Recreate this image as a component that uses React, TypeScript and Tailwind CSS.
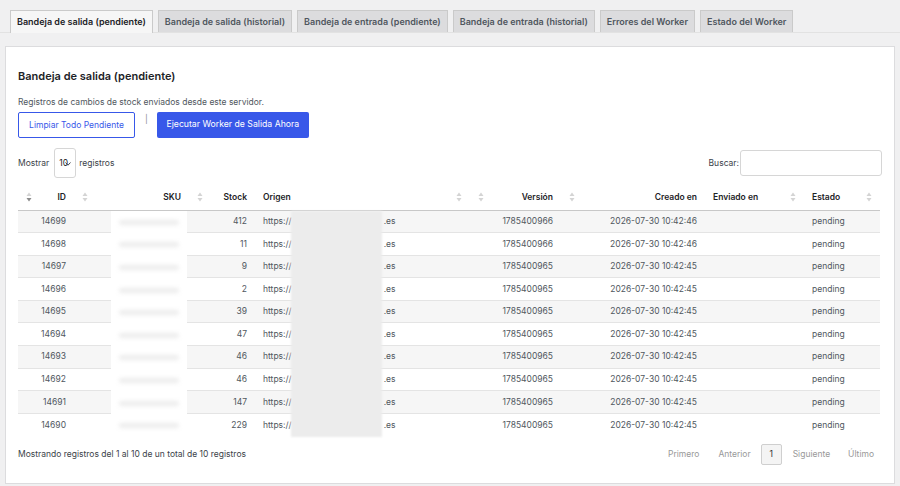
const tabs = [
  'Bandeja de salida (pendiente)',
  'Bandeja de salida (historial)',
  'Bandeja de entrada (pendiente)',
  'Bandeja de entrada (historial)',
  'Errores del Worker',
  'Estado del Worker'
]

const rows = [
  { id: 14699, stock: 412, version: '1785400966', created: '2026-07-30 10:42:46' },
  { id: 14698, stock: 11, version: '1785400966', created: '2026-07-30 10:42:46' },
  { id: 14697, stock: 9, version: '1785400965', created: '2026-07-30 10:42:45' },
  { id: 14696, stock: 2, version: '1785400965', created: '2026-07-30 10:42:45' },
  { id: 14695, stock: 39, version: '1785400965', created: '2026-07-30 10:42:45' },
  { id: 14694, stock: 47, version: '1785400965', created: '2026-07-30 10:42:45' },
  { id: 14693, stock: 46, version: '1785400965', created: '2026-07-30 10:42:45' },
  { id: 14692, stock: 46, version: '1785400965', created: '2026-07-30 10:42:45' },
  { id: 14691, stock: 147, version: '1785400965', created: '2026-07-30 10:42:45' },
  { id: 14690, stock: 229, version: '1785400965', created: '2026-07-30 10:42:45' }
]

const SortIcon = ({ active = false }: { active?: boolean }) => (
  <svg width="6" height="10" viewBox="0 0 6 10" className="inline-block shrink-0">
    <path d="M3 0.5 L5.5 4 L0.5 4 Z" fill="#d4d4d4" />
    <path d="M0.5 6 L5.5 6 L3 9.5 Z" fill={active ? '#8c8c8c' : '#d4d4d4'} />
  </svg>
)

const Th = ({
  label,
  numeric = false,
  active = false,
  w
}: {
  label: string
  numeric?: boolean
  active?: boolean
  w: string
}) => (
  <th className={`${w} px-2 h-[25px] font-semibold text-[#1d2327]`}>
    {numeric ? (
      <div className="flex items-center justify-between">
        <SortIcon active={active} />
        <span>{label}</span>
      </div>
    ) : (
      <div className="flex items-center justify-between">
        <span>{label}</span>
        <SortIcon />
      </div>
    )}
  </th>
)

const App = () => {
  return (
    <div
      className="w-[900px] h-[486px] bg-[#f0f0f1] text-[8.5px] text-[#3c434a] overflow-hidden"
      style={{ fontFamily: 'Inter, "Noto Sans", sans-serif' }}
    >
      <div className="pt-[10px] border-b border-[#e2e2e2] flex pl-[10px] gap-[5px]">
        {tabs.map((t, i) => (
          <div
            key={t}
            className={`px-[6px] flex items-center text-[9px] font-semibold border border-b-0 border-[#cacaca] ${
              i === 0 ? 'bg-[#f6f6f6] text-[#1d2327] -mb-px h-[23px]' : 'bg-[#dcdcde] text-[#50575e] h-[22px]'
            }`}
          >
            {t}
          </div>
        ))}
      </div>

      <div className="mt-[13px] mx-[5px] h-[438px] bg-white border border-[#dcdcde] px-[12px]">
        <h2 className="mt-[21px] text-[11px] font-semibold text-[#1d2327] leading-[16px]">
          Bandeja de salida (pendiente)
        </h2>
        <p className="mt-[12px] text-[#50575e] leading-[12px]">
          Registros de cambios de stock enviados desde este servidor.
        </p>
        <div className="mt-[4px] flex items-start">
          <button className="h-[26px] w-[117px] border border-[#3858e9] text-[#3858e9] rounded-[2px] bg-white">
            Limpiar Todo Pendiente
          </button>
          <span className="ml-[10px] mt-[1px] text-[#8c8f94] leading-[12px]">|</span>
          <button className="ml-[9px] h-[26px] w-[152px] bg-[#3858e9] text-white rounded-[2px] text-[8.7px]">
            Ejecutar Worker de Salida Ahora
          </button>
        </div>

        <div className="mt-[10px] flex items-start justify-between">
          <div className="flex items-center h-[30px]">
            <span>Mostrar</span>
            <div className="ml-[5px] w-[22px] h-[30px] border border-[#d6d6d6] rounded-[3px] flex items-center pl-[4px] text-[#1d2327]">
              <span>10</span>
              <svg width="6" height="4" viewBox="0 0 6 4" className="-ml-[3px] mt-[1px]">
                <path d="M0.5 0.5 L3 3.2 L5.5 0.5" stroke="#3c434a" strokeWidth="1" fill="none" />
              </svg>
            </div>
            <span className="ml-[3px]">registros</span>
          </div>
          <div className="flex items-center mt-[2px]">
            <span>Buscar:</span>
            <div className="ml-[1px] w-[142px] h-[26px] border border-[#d6d6d6] rounded-[3px]" />
          </div>
        </div>

        <div className="relative mt-[7px]">
          <table className="w-[862px] table-fixed border-collapse">
            <thead>
              <tr className="border-b border-[#c8c8c8]">
                <Th label="ID" numeric active w="w-[56px]" />
                <Th label="SKU" numeric w="w-[115px]" />
                <Th label="Stock" numeric w="w-[66px]" />
                <Th label="Origen" w="w-[215px]" />
                <Th label="Versión" numeric w="w-[91px]" />
                <Th label="Creado en" numeric w="w-[144px]" />
                <Th label="Enviado en" w="w-[99px]" />
                <Th label="Estado" w="w-[76px]" />
              </tr>
            </thead>
            <tbody className="text-[#50575e]">
              {rows.map((r, i) => (
                <tr
                  key={r.id}
                  className={`h-[22.6px] border-b border-[#e4e4e4] last:border-b-0 ${
                    i % 2 === 0 ? 'bg-[#f6f6f6]' : 'bg-white'
                  }`}
                >
                  <td className="px-2 text-right">{r.id}</td>
                  <td className="px-2 text-right"></td>
                  <td className="px-2 text-right">{r.stock}</td>
                  <td className="px-2 whitespace-nowrap">
                    https://<span className="inline-block w-[92px]" />.es
                  </td>
                  <td className="px-2 text-right">{r.version}</td>
                  <td className="px-2 text-right">{r.created}</td>
                  <td className="px-2"></td>
                  <td className="px-2">pending</td>
                </tr>
              ))}
            </tbody>
          </table>
          {/* redacted columns */}
          <div className="absolute left-[93px] top-[26px] w-[76px] h-[226px] bg-white flex flex-col overflow-hidden">
            {rows.map((r) => (
              <div key={r.id} className="h-[22.6px] flex items-center px-[8px] shrink-0">
                <div className="h-[5px] w-full rounded-full bg-[#ececec] blur-[2px]" />
              </div>
            ))}
          </div>
          <div className="absolute left-[273px] top-[26px] w-[91px] h-[226px] bg-[#ececec] blur-[1px]" />
        </div>

        <div className="mt-[8px] flex items-center justify-between">
          <span>Mostrando registros del 1 al 10 de un total de 10 registros</span>
          <div className="flex items-center text-[#999] pr-[8px]">
            <span>Primero</span>
            <span className="ml-[19px]">Anterior</span>
            <span className="ml-[10px] w-[21px] h-[21px] border border-[#cfcfcf] rounded-[2px] bg-[#f4f4f4] flex items-center justify-center text-[#333]">
              1
            </span>
            <span className="ml-[11px]">Siguiente</span>
            <span className="ml-[18px]">Último</span>
          </div>
        </div>
      </div>
    </div>
  )
}

export default App
